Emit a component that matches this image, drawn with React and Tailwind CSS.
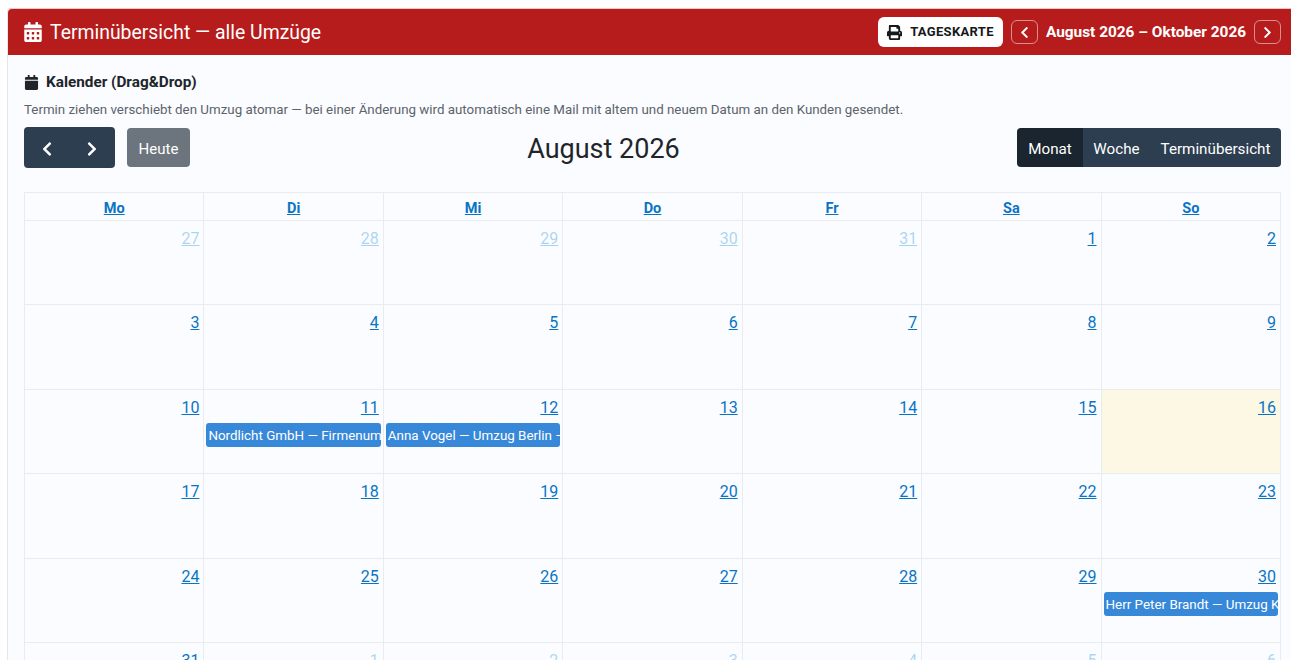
import { FaCalendarAlt, FaCalendar, FaPrint, FaChevronLeft, FaChevronRight } from "react-icons/fa";

const dayNames = ["Mo", "Di", "Mi", "Do", "Fr", "Sa", "So"];

const weeks = [
  [[27, 1], [28, 1], [29, 1], [30, 1], [31, 1], [1], [2]],
  [[3], [4], [5], [6], [7], [8], [9]],
  [[10], [11], [12], [13], [14], [15], [16]],
  [[17], [18], [19], [20], [21], [22], [23]],
  [[24], [25], [26], [27], [28], [29], [30]],
  [[31], [1, 1], [2, 1], [3, 1], [4, 1], [5, 1], [6, 1]],
];

const events = {
  "2-1": "Nordlicht GmbH — Firmenumzug Hamburg",
  "2-2": "Anna Vogel — Umzug Berlin – Potsdam",
  "4-6": "Herr Peter Brandt — Umzug Köln",
};

const App = () => {
  return (
    <div className="h-[660px] w-full overflow-hidden bg-white pl-[7px] pt-2 font-['Roboto',sans-serif]">
      <div className="h-[700px] w-[1300px] rounded-t border-l border-t border-l-gray-200 border-t-[#f3c4c4] bg-[#fafcff]">
        <div className="flex h-[46px] w-[1283px] items-center justify-between rounded-tl bg-[#b71c1c] pl-[15px] pr-[10px] text-white">
          <div className="flex items-center gap-[7px]">
            <FaCalendarAlt className="text-[20px]" />
            <span className="pt-px text-[19.4px]">Terminübersicht — alle Umzüge</span>
          </div>
          <div className="flex items-center">
            <button className="mr-2 flex h-[30px] w-[125px] items-center justify-center gap-2 rounded-md bg-white text-[13px] font-bold tracking-wide text-[#16181b]">
              <FaPrint className="text-[15px]" />
              TAGESKARTE
            </button>
            <button className="flex h-6 w-[27px] items-center justify-center rounded-md border border-white/50 text-[13px]">
              <FaChevronLeft />
            </button>
            <span className="w-[216px] pt-px text-center text-[15.4px] font-bold">August 2026 – Oktober 2026</span>
            <button className="flex h-6 w-[27px] items-center justify-center rounded-md border border-white/50 text-[13px]">
              <FaChevronRight />
            </button>
          </div>
        </div>

        <div className="w-[1273px] pl-[16px] pt-[18px]">
          <div className="flex h-[19px] items-center gap-[7px] text-[15.3px] font-bold text-[#212529]">
            <FaCalendar className="text-[15px]" />
            Kalender (Drag&amp;Drop)
          </div>
          <p className="mt-[8px] h-[20px] text-[13.33px] leading-[20px] text-[#5c636a]">
            Termin ziehen verschiebt den Umzug atomar — bei einer Änderung wird automatisch eine Mail mit altem und neuem Datum an den Kunden gesendet.
          </p>

          <div className="mt-[7px] flex h-[41px] items-center justify-between">
            <div className="flex w-[166px] items-center">
              <div className="flex h-[41px] w-[91px] overflow-hidden rounded bg-[#2c3e50] text-white">
                <button className="flex flex-1 items-center justify-center pt-[3px] text-[16px]"><FaChevronLeft /></button>
                <button className="flex flex-1 items-center justify-center pt-[3px] text-[16px]"><FaChevronRight /></button>
              </div>
              <button className="ml-3 h-[39px] w-[63px] rounded bg-[#6c757d] pt-[3px] text-[15px] text-white">Heute</button>
            </div>
            <h2 className="pt-[3px] text-[27px] text-[#212529]">August 2026</h2>
            <div className="flex h-[39px] overflow-hidden rounded text-[15.2px] text-white">
              <button className="w-[66px] bg-[#1a252f] pt-[3px]">Monat</button>
              <button className="w-[67px] bg-[#2c3e50] pt-[3px]">Woche</button>
              <button className="w-[131px] bg-[#2c3e50] pt-[3px]">Terminübersicht</button>
            </div>
          </div>

          <div className="mt-[24px] border-l border-t border-[#e9ecef]">
            <div className="grid h-[28px] grid-cols-7">
              {dayNames.map((name) => (
                <div key={name} className="flex items-center justify-center border-b border-r border-[#e9ecef] pt-[5px] text-[14.5px] font-bold text-[#0a74c4] underline">
                  {name}
                </div>
              ))}
            </div>
            {weeks.map((week, w) => (
              <div key={w} className="grid h-[84.4px] grid-cols-7">
                {week.map(([day, muted], d) => (
                  <div
                    key={d}
                    className={`min-w-0 overflow-hidden border-b border-r border-[#e9ecef] ${w === 2 && d === 6 ? "bg-[#fcf8e3]" : ""}`}
                  >
                    <div className={`pr-1 pt-[6px] text-right text-[16px] leading-6 underline ${muted ? "text-[#0a8ad0]/35" : "text-[#0a74c4]"}`}>
                      {day}
                    </div>
                    {events[`${w}-${d}`] && (
                      <div className="ml-[2px] mr-[2px] mt-[3px] h-6 overflow-hidden whitespace-nowrap rounded-[3px] bg-[#3788d8] px-[2px] pt-px text-[13.4px] leading-6 text-white">
                        {events[`${w}-${d}`]}
                      </div>
                    )}
                  </div>
                ))}
              </div>
            ))}
          </div>
        </div>
      </div>
    </div>
  );
};

export default App;
